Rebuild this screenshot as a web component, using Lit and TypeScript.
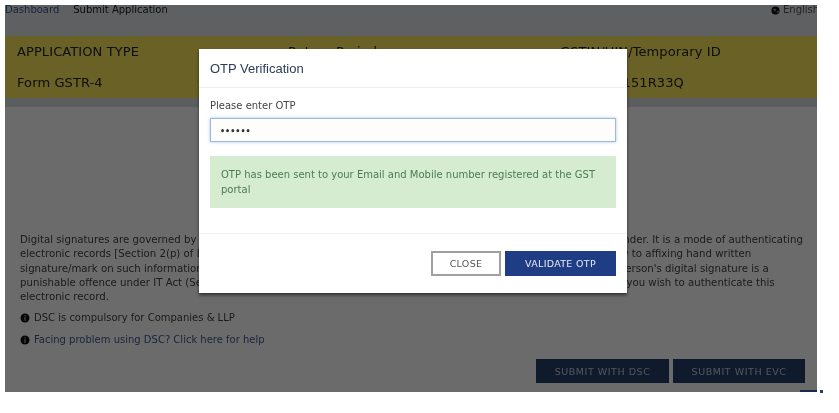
import { LitElement, html, css } from 'lit';
import { customElement } from 'lit/decorators.js';

@customElement('app-root')
export class AppRoot extends LitElement {
  static styles = css`
    :host {
      display: block;
      position: relative;
      width: 839px;
      height: 413px;
      background: #fff;
      font-family: 'DejaVu Sans', Verdana, sans-serif;
      overflow: hidden;
    }
    .frame {
      padding: 5px 22px 21px 5px;
      height: 413px;
      box-sizing: border-box;
      filter: blur(0.6px);
    }
    .screen {
      position: relative;
      height: 100%;
      display: flex;
      flex-direction: column;
      background: #fff;
      overflow: hidden;
    }
    .topbar {
      height: 31px;
      flex: none;
      display: flex;
      justify-content: space-between;
      background: #e2e4ea;
      font-size: 10px;
      line-height: 10px;
      color: #222;
    }
    .crumbs { display: flex; gap: 14px; }
    .crumbs a { color: #3a5c92; }
    .lang { display: flex; align-items: center; gap: 3px; height: 10px; width: 46px; overflow: hidden; white-space: nowrap; flex: none; color: #555; }
    .lang svg { flex: none; }
    .band {
      height: 62px;
      flex: none;
      box-sizing: border-box;
      background: #fce65d;
      display: grid;
      grid-template-columns: 271px 272px 1fr;
      grid-template-rows: 1fr 1fr;
      padding: 0 12px;
      align-items: center;
      font-size: 13px;
      letter-spacing: 0.1px;
      color: #222;
    }
    .band-shadow { height: 9px; flex: none; background: #dcdde2; }
    .content {
      flex: 1;
      position: relative;
      background: #fff;
      padding: 126px 12px 0 15px;
      font-size: 10px;
      line-height: 14.3px;
      color: #444;
    }
    .content p { margin: 0 0 7px; white-space: nowrap; font-size: 10.2px; }
    .note { display: flex; align-items: center; gap: 4px; height: 14px; margin-bottom: 8px; }
    .note a { color: #3a5c92; }
    .note svg { flex: none; }
    .actions { display: flex; justify-content: flex-end; gap: 4px; padding-top: 4px; }
    .actions button {
      height: 24px;
      border: 0;
      background: #24406c;
      color: #c4cad8;
      font: 9.5px 'DejaVu Sans', sans-serif;
      letter-spacing: 0.55px;
      padding: 0;
    }
    .dsc { width: 133px; }
    .evc { width: 132px; }
    .overlay { position: absolute; inset: 0; background: rgba(0, 0, 0, 0.58); }
    .modal {
      position: absolute;
      left: 194px;
      top: 44px;
      width: 428px;
      height: 244px;
      background: #fff;
      box-shadow: 0 2px 3px rgba(0, 0, 0, 0.55);
      display: flex;
      flex-direction: column;
    }
    .modal header {
      height: 39px;
      flex: none;
      box-sizing: border-box;
      border-bottom: 1px solid #f0f0f0;
      padding: 0 11px;
      display: flex;
      align-items: center;
      font: 13px 'Liberation Sans', Arial, sans-serif;
      color: #2c3d55;
    }
    .body { flex: 1; padding: 12px 11px 0; box-sizing: border-box; border-bottom: 1px solid #f0f0f0; }
    label { display: block; font-size: 10px; line-height: 12px; color: #444; margin-bottom: 6px; }
    .field {
      height: 24px;
      box-sizing: border-box;
      border: 1px solid #9fb8d8;
      box-shadow: 0 0 3px rgba(102, 150, 220, 0.55);
      background: #fdfdfb;
      padding: 2px 9px 0;
      display: flex;
      align-items: center;
      font-size: 8px;
      font-weight: bold;
      color: #333;
    }
    .alert {
      margin-top: 14px;
      height: 52px;
      box-sizing: border-box;
      background: #d6ecd0;
      padding: 11px 11px;
      font-size: 10px;
      line-height: 15px;
      color: #4c7c52;
    }
    .modal footer {
      height: 59px;
      flex: none;
      box-sizing: border-box;
      padding: 17px 11px 0;
      display: flex;
      justify-content: flex-end;
      gap: 4px;
    }
    .modal footer button {
      height: 25px;
      box-sizing: border-box;
      font: 9.5px 'DejaVu Sans', sans-serif;
      letter-spacing: 0.3px;
      padding: 0;
    }
    .close { width: 70px; background: #fff; border: 2px solid #a0a0a0; color: #555; }
    .validate { width: 111px; background: #1f3d84; border: 0; color: #e6ecf6; }
    .edge-bar { position: absolute; left: 800px; top: 390px; width: 17px; height: 2px; background: #1b2a4a; }
    .edge-dot { position: absolute; left: 820px; top: 390px; width: 3px; height: 3px; background: #2b3f6b; }
  `;

  private info() {
    return html`<svg width="10" height="10" viewBox="0 0 10 10">
      <circle cx="5" cy="5" r="4.5" fill="#111"></circle>
      <rect x="4.2" y="4.2" width="1.6" height="3.6" fill="#888"></rect>
      <rect x="4.2" y="2.2" width="1.6" height="1.3" fill="#888"></rect>
    </svg>`;
  }

  render() {
    return html`
      <div class="frame">
        <div class="screen">
          <div class="topbar">
            <div class="crumbs"><a>Dashboard</a><span>Submit Application</span></div>
            <div class="lang">
              <svg width="9" height="9" viewBox="0 0 10 10">
                <circle cx="5" cy="5" r="4.5" fill="#111"></circle>
                <path d="M2 3h3l1 2-2 1zM6 7l2-2 1 1-2 2z" fill="#888"></path>
              </svg>
              <span>English</span>
            </div>
          </div>
          <div class="band">
            <span>APPLICATION TYPE</span><span>Return Period</span><span>GSTIN/UIN/Temporary ID</span>
            <span>Form GSTR-4</span><span>2017-18</span><span>07AAACR151R33Q</span>
          </div>
          <div class="band-shadow"></div>
          <div class="content">
            <p>
              Digital signatures are governed by Information Technology (IT) Act, 2000 and all the rules and regulation made thereunder. It is a mode of authenticating<br />
              electronic records [Section 2(p) of IT Act]. Affixing digital signature on a document or record is legally equivalent in law to affixing hand written<br />
              signature/mark on such information or documents as per Sections 3 and 5 of this Act. Unauthorised use of any other person's digital signature is a<br />
              punishable offence under IT Act (Section 66C). Please do ensure that you select the correct DSC certificate with which you wish to authenticate this<br />
              electronic record.
            </p>
            <div class="note">${this.info()}<span>DSC is compulsory for Companies &amp; LLP</span></div>
            <div class="note">${this.info()}<a>Facing problem using DSC? Click here for help</a></div>
            <div class="actions">
              <button class="dsc">SUBMIT WITH DSC</button>
              <button class="evc">SUBMIT WITH EVC</button>
            </div>
          </div>
          <div class="overlay"></div>
          <div class="modal">
            <header>OTP Verification</header>
            <div class="body">
              <label>Please enter OTP</label>
              <div class="field">••••••</div>
              <div class="alert">OTP has been sent to your Email and Mobile number registered at the GST portal</div>
            </div>
            <footer>
              <button class="close">CLOSE</button>
              <button class="validate">VALIDATE OTP</button>
            </footer>
          </div>
        </div>
      </div>
      <div class="edge-bar"></div>
      <div class="edge-dot"></div>
    `;
  }
}
